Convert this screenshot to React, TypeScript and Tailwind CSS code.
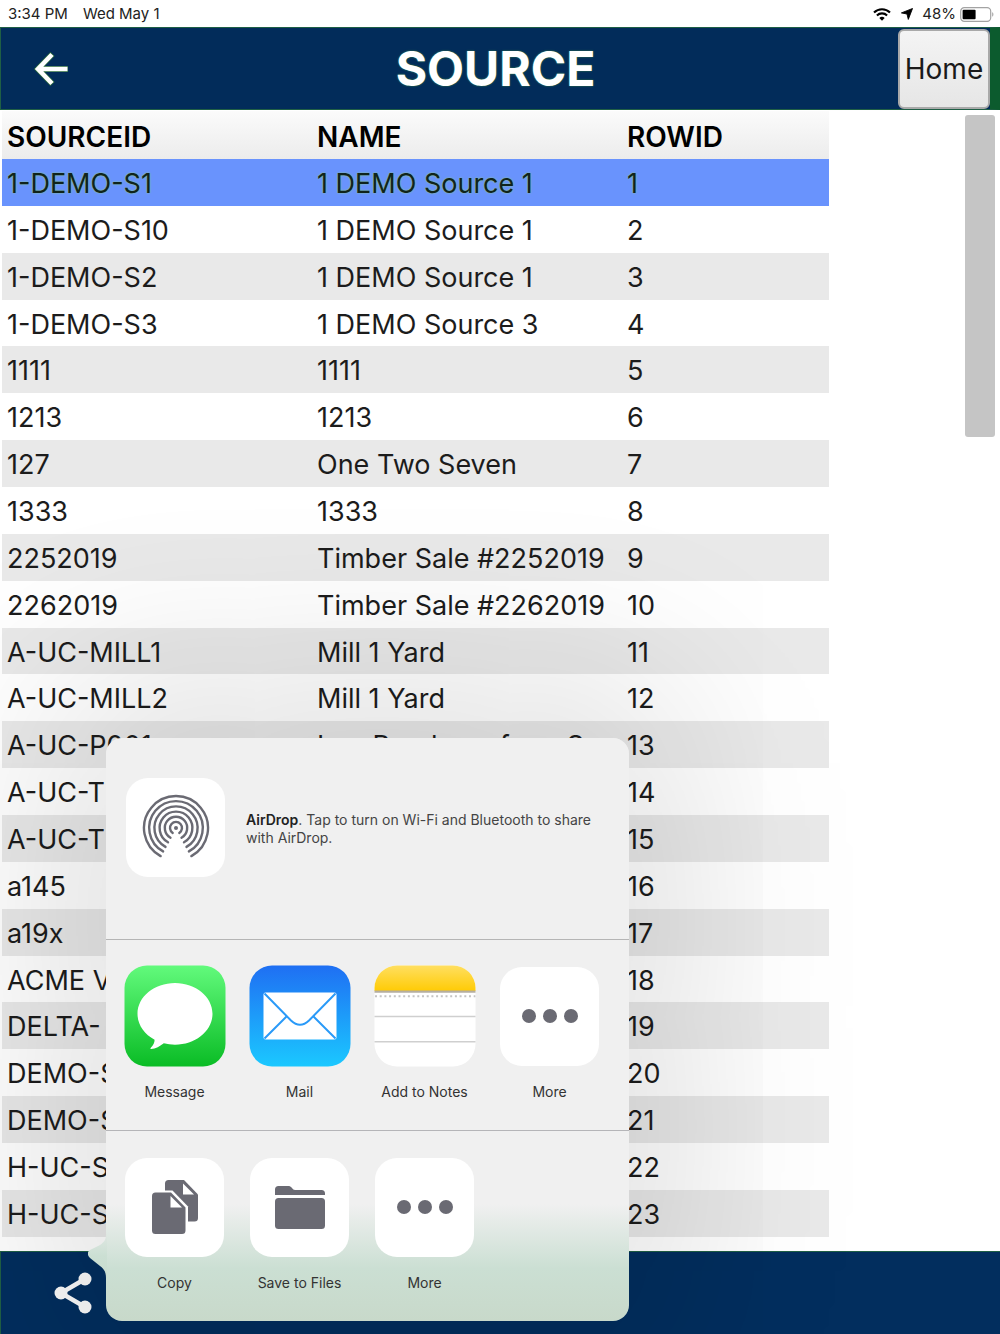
import type { ReactNode } from 'react'

type Row = { id: string; name?: string }

const rows: Row[] = [
  { id: '1-DEMO-S1', name: '1 DEMO Source 1' },
  { id: '1-DEMO-S10', name: '1 DEMO Source 1' },
  { id: '1-DEMO-S2', name: '1 DEMO Source 1' },
  { id: '1-DEMO-S3', name: '1 DEMO Source 3' },
  { id: '1111', name: '1111' },
  { id: '1213', name: '1213' },
  { id: '127', name: 'One Two Seven' },
  { id: '1333', name: '1333' },
  { id: '2252019', name: 'Timber Sale #2252019' },
  { id: '2262019', name: 'Timber Sale #2262019' },
  { id: 'A-UC-MILL1', name: 'Mill 1 Yard' },
  { id: 'A-UC-MILL2', name: 'Mill 1 Yard' },
  { id: 'A-UC-P001', name: 'Log Purchase from S' },
  { id: 'A-UC-T' },
  { id: 'A-UC-T' },
  { id: 'a145' },
  { id: 'a19x' },
  { id: 'ACME V' },
  { id: 'DELTA-' },
  { id: 'DEMO-S' },
  { id: 'DEMO-S' },
  { id: 'H-UC-S' },
  { id: 'H-UC-S' },
]

function StatusBar() {
  return (
    <div className="flex h-[27px] items-center justify-between bg-white pt-px pr-[6px] pl-2 text-[15px] text-[#222]">
      <div className="flex gap-[15px]">
        <span>3:34 PM</span>
        <span>Wed May 1</span>
      </div>
      <div className="flex items-center">
        <svg width="18" height="13" viewBox="0 0 18 13" fill="none" stroke="#000" strokeWidth="2.1">
          <path d="M1 4.6a11.4 11.4 0 0 1 16 0" />
          <path d="M3.9 7.5a7.3 7.3 0 0 1 10.2 0" />
          <path d="M9 12.8 6.3 10a3.9 3.9 0 0 1 5.4 0z" fill="#000" stroke="none" />
        </svg>
        <svg className="ml-[10px]" width="12" height="12" viewBox="0 0 12 12">
          <path d="M11.5.5 7.3 11.4 6 6 .4 4.9z" fill="#000" stroke="#000" strokeWidth="0.9" strokeLinejoin="round" />
        </svg>
        <span className="ml-[9px]">48%</span>
        <svg className="ml-1" width="34" height="15" viewBox="0 0 34 15">
          <rect x="0.7" y="0.7" width="30" height="13.6" rx="3.6" fill="#fff" stroke="#a3a3a3" strokeWidth="1.2" />
          <rect x="2.6" y="2.8" width="13" height="9.4" rx="1" fill="#000" />
          <path d="M32.2 5.3c1.6.6 1.6 3.8 0 4.4z" fill="#a3a3a3" />
        </svg>
      </div>
    </div>
  )
}

function Header() {
  return (
    <header className="grid h-[83px] grid-cols-[1fr_auto_1fr] items-center border-y border-r-[10px] border-l border-y-[#1f5f45] border-r-[#0c5b2e] border-l-[#1f5f45] bg-[#022c5a]">
      <button type="button" aria-label="Back" className="ml-[33px] w-9">
        <svg width="36" height="34" viewBox="0 0 36 34" fill="none" stroke="#2b6b3d" strokeWidth="6">
          <path d="M34 17H5M18.5 2 4 17l14.5 15" />
          <path d="M33.5 17H5M18 2.5 4 17l14 14.5" stroke="#fff" strokeWidth="4.6" />
        </svg>
      </button>
      <h1 className="text-5xl leading-none font-bold text-white [text-shadow:0_0_2px_#3f8f45]">SOURCE</h1>
      <button
        type="button"
        className="h-20 w-[92px] justify-self-end rounded-[6px] border-2 border-[#a9a9a9] bg-linear-to-b from-[#f4f4f4] to-[#e6e6e6] text-[28px] text-[#1a1a1a]"
      >
        Home
      </button>
    </header>
  )
}

function SourceTable() {
  return (
    <table className="h-[1126px] w-[83%] table-fixed border-collapse text-left text-[27px] leading-8 whitespace-nowrap text-[#1c1c1c]">
      <colgroup>
        <col className="w-[37.5%]" />
        <col className="w-[37.5%]" />
        <col className="w-[25%]" />
      </colgroup>
      <thead>
        <tr className="h-12 bg-linear-to-b from-[#fbfbfb] to-[#ececec] text-[28px] text-black">
          <th className="pt-[3px] pl-[5px] font-semibold">SOURCEID</th>
          <th className="pt-[3px] pl-[5px] font-semibold">NAME</th>
          <th className="pt-[3px] pl-[5px] font-semibold">ROWID</th>
        </tr>
      </thead>
      <tbody>
        {rows.map((row, i) => (
          <tr
            key={i}
            className={
              i === 0
                ? 'h-[46px] bg-[#6993fd] text-[#10241c] [text-shadow:0_0_2px_#8fd07a]'
                : 'h-[46px] even:bg-white odd:bg-[#e9e9e9]'
            }
          >
            <td className="pt-[3px] pl-[5px]">{row.id}</td>
            <td className="pt-[3px] pl-[5px]">{row.name}</td>
            <td className="pt-[3px] pl-[5px]">{i + 1}</td>
          </tr>
        ))}
      </tbody>
    </table>
  )
}

function Tile({ children }: { children: ReactNode }) {
  return <span className="flex size-[99px] items-center justify-center rounded-[22px] bg-white">{children}</span>
}

function AirDropIcon() {
  return (
    <svg width="68" height="68" viewBox="-34 -34 68 68" fill="none" stroke="#6a6a73" strokeWidth="2.4" strokeLinecap="round">
      <circle r="2" fill="#6a6a73" stroke="none" />
      <path d="M-3.3 4.9A6 6 0 1 1 3.3 4.9" />
      <path d="M-5.5 9.7A11.2 11.2 0 1 1 5.5 9.7" />
      <path d="M-8 14.3A16.4 16.4 0 1 1 8 14.3" />
      <path d="M-10.500 18.900A21.600 21.600 0 1 1 10.500 18.900" />
      <path d="M-12.900 23.400A26.800 26.800 0 1 1 12.900 23.400" />
      <path d="M-15.400 28.100A32 32 0 1 1 15.400 28.100" />
    </svg>
  )
}

function MessageIcon() {
  return (
    <svg width="102" height="102" viewBox="0 0 102 102">
      <defs>
        <linearGradient id="message" x1="0" y1="0" x2="0" y2="1">
          <stop offset="0" stopColor="#62fa7c" />
          <stop offset="1" stopColor="#0abc25" />
        </linearGradient>
      </defs>
      <rect x="0.5" y="0.5" width="101" height="101" rx="22.5" fill="url(#message)" />
      <path
        d="M51 18c20.700 0 37.500 13.800 37.500 30.800S71.700 79.700 51 79.700c-3.900 0-7.700-.5-11.200-1.400-3.600 3-8.400 5.400-12.600 5.800-.9 0-1-.8-.4-1.400 2.700-2.600 3.800-5.300 3.800-8C20 69.200 13.500 59.500 13.500 48.800 13.500 31.800 30.300 18 51 18z"
        fill="#fff"
      />
    </svg>
  )
}

function MailIcon() {
  return (
    <svg width="102" height="102" viewBox="0 0 102 102">
      <defs>
        <linearGradient id="mail" x1="0" y1="0" x2="0" y2="1">
          <stop offset="0" stopColor="#1f6ff3" />
          <stop offset="1" stopColor="#1bc8ff" />
        </linearGradient>
      </defs>
      <rect x="0.5" y="0.5" width="101" height="101" rx="22.5" fill="url(#mail)" />
      <rect x="14.5" y="27.5" width="73" height="47" rx="2" fill="#fff" />
      <g fill="none" stroke="#2a9af8" strokeWidth="2">
        <path d="M15.500 28.500 42 55.500q9 8.500 18 0L86.500 28.500" />
        <path d="M15.500 73.500 37.500 51.500M86.500 73.500 64.500 51.500" />
      </g>
    </svg>
  )
}

function NotesIcon() {
  return (
    <svg width="102" height="102" viewBox="0 0 102 102">
      <defs>
        <linearGradient id="notes" x1="0" y1="0" x2="0" y2="1">
          <stop offset="0" stopColor="#ffdf62" />
          <stop offset="1" stopColor="#ffcb05" />
        </linearGradient>
        <clipPath id="notes-shape">
          <rect x="0.5" y="0.5" width="101" height="101" rx="22.5" />
        </clipPath>
      </defs>
      <g clipPath="url(#notes-shape)">
        <path fill="#fff" d="M0 0h102v102H0z" />
        <path fill="url(#notes)" d="M0 0h102v26H0z" />
        <path fill="#b5aea0" d="M0 25.600h102v2.200H0z" />
        <path d="M1 31.300h101" stroke="#c4c4c4" strokeWidth="2" strokeDasharray="2 2.700" />
        <path d="M0 51.500h102M0 76.800h102" stroke="#cfcfcf" strokeWidth="1.5" />
      </g>
    </svg>
  )
}

function MoreIcon() {
  return (
    <Tile>
      <svg width="58" height="14" viewBox="0 0 58 14" fill="#6a6a73">
        <circle cx="8" cy="7" r="7" />
        <circle cx="29" cy="7" r="7" />
        <circle cx="50" cy="7" r="7" />
      </svg>
    </Tile>
  )
}

function CopyIcon() {
  return (
    <Tile>
      <svg width="46" height="54" viewBox="0 0 46 54">
        <path d="M16.500 0H32l14 14.500V38a3.500 3.500 0 0 1-3.500 3.500H13V3.500A3.500 3.500 0 0 1 16.500 0z" fill="#6a6a73" />
        <path d="M31 3.500v11h11z" fill="#fff" />
        <path d="M-2 10.500h22.500L36 26.500V56H-2z" fill="#fff" />
        <path d="M3.500 12.500H19l14.500 15v23A3.500 3.500 0 0 1 30 54H3.500A3.500 3.500 0 0 1 0 50.500V16a3.500 3.500 0 0 1 3.500-3.500z" fill="#6a6a73" />
        <path d="M18.500 16v11.500H30z" fill="#fff" />
      </svg>
    </Tile>
  )
}

function FolderIcon() {
  return (
    <Tile>
      <svg width="50" height="43" viewBox="0 0 50 43" fill="#6a6a73">
        <path d="M0 9V3.500A3.500 3.500 0 0 1 3.500 0H14c2.500 0 3.500 4 6 4h26.500A3.500 3.500 0 0 1 50 7.500V9z" />
        <rect y="12" width="50" height="31" rx="3.5" />
      </svg>
    </Tile>
  )
}

function Action({ label, children }: { label: string; children: ReactNode }) {
  return (
    <button type="button" className="flex w-[125px] flex-col items-center text-[14px] leading-5 text-[#333]">
      <span className="flex h-[102px] items-center">{children}</span>
      <span className="mt-[15px]">{label}</span>
    </button>
  )
}

function SharePopover() {
  return (
    <section
      aria-label="Share"
      className="absolute bottom-[13px] left-[106px] w-[523px] rounded-[16px] bg-linear-to-b from-[#f0f0f0] from-80% via-[#cbdfd3] via-91% to-[#c8d9ca] shadow-[0_0_200px_50px_rgba(0,0,0,0.14)]"
    >
      <svg className="absolute bottom-[31px] -left-[18px]" width="19" height="62" viewBox="0 0 19 62">
        <defs>
          <linearGradient id="arrow" x1="0" y1="0" x2="0" y2="1">
            <stop offset="0" stopColor="#dfe7e2" />
            <stop offset="0.5" stopColor="#cbdfd3" />
            <stop offset="1" stopColor="#c9dccf" />
          </linearGradient>
        </defs>
        <path d="M19 6h-1c0 6-2 8-6 11L2 22c-3 2-3 5 0 8l10 8c4 3 6 6 6 12h1z" fill="url(#arrow)" />
      </svg>
      <div className="flex h-[202px] items-start border-b border-[#b5b5b5] pt-10 pl-5">
        <button type="button" aria-label="AirDrop">
          <Tile>
            <AirDropIcon />
          </Tile>
        </button>
        <p className="mt-[33px] ml-[21px] w-[370px] text-[14px] leading-[18px] text-[#444]">
          <b className="font-semibold text-[#222]">AirDrop</b>. Tap to turn on Wi-Fi and Bluetooth to share with AirDrop.
        </p>
      </div>
      <div className="flex border-b border-[#b5b5b8] pt-[25px] pb-7 pl-[6px]">
        <Action label="Message">
          <MessageIcon />
        </Action>
        <Action label="Mail">
          <MailIcon />
        </Action>
        <Action label="Add to Notes">
          <NotesIcon />
        </Action>
        <Action label="More">
          <MoreIcon />
        </Action>
      </div>
      <div className="flex pt-[25px] pb-7 pl-[6px]">
        <Action label="Copy">
          <CopyIcon />
        </Action>
        <Action label="Save to Files">
          <FolderIcon />
        </Action>
        <Action label="More">
          <MoreIcon />
        </Action>
      </div>
    </section>
  )
}

export default function App() {
  return (
    <div className="relative flex min-h-screen flex-col overflow-hidden bg-white font-[Inter,'Liberation_Sans',sans-serif]">
      <StatusBar />
      <Header />
      <main className="flex flex-1 items-start justify-between px-[2px] pt-px">
        <SourceTable />
        <div className="mt-1 mr-[3px] h-[322px] w-[30px] rounded-[3px] bg-[#c5c5c5]" />
      </main>
      <footer className="flex h-[83px] items-center border-t border-l border-[#1f5f45] bg-[#022e5e]">
        <button type="button" aria-label="Share" className="ml-[53px]">
          <svg width="38" height="42" viewBox="0 0 38 42">
            <path d="M31 7 7 21l24 14" fill="none" stroke="#fafafa" strokeWidth="4.5" />
            <g fill="#fafafa">
              <circle cx="31" cy="7" r="6.5" />
              <circle cx="7" cy="21" r="6.5" />
              <circle cx="31" cy="35" r="6.5" />
            </g>
          </svg>
        </button>
      </footer>
      <SharePopover />
    </div>
  )
}
